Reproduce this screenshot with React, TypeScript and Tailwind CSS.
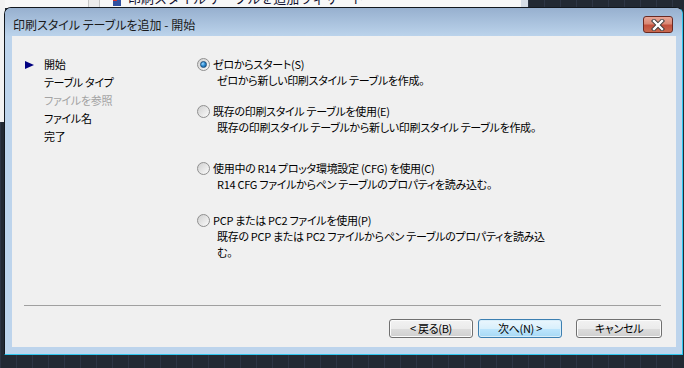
import React from "react";

function Radio({ checked }: { checked?: boolean }) {
  return (
    <span className="relative inline-flex h-[13px] w-[13px] shrink-0 items-center justify-center rounded-full border border-[#8f8f8f] bg-gradient-to-br from-[#d0d0d0] to-[#fbfbfb]">
      {checked && (
        <span className="h-[7px] w-[7px] rounded-full border border-[#1d4f7c] bg-[radial-gradient(circle_at_35%_35%,#9fd8ff_0%,#2f8fd6_45%,#0f4f8c_100%)]" />
      )}
    </span>
  );
}

function Option({
  label,
  desc,
  checked,
  className,
}: {
  label: string;
  desc: React.ReactNode;
  checked?: boolean;
  className?: string;
}) {
  return (
    <div className={className}>
      <div className="flex h-[16px] items-center leading-[16px]">
        <Radio checked={checked} />
        <span className="ml-[3px]">{label}</span>
      </div>
      <div className="pl-[20px] leading-[16px]">{desc}</div>
    </div>
  );
}

function Btn({ children, focus, w }: { children: React.ReactNode; focus?: boolean; w: string }) {
  return (
    <div
      className={
        "flex h-[19px] items-center justify-center rounded-[3px] border text-[11px] leading-none " +
        w +
        " " +
        (focus
          ? "border-[#3c7fb1] bg-[linear-gradient(#eaf6fd_0%,#d9f0fc_50%,#bee6fd_50%,#a7d9f5_100%)] shadow-[inset_0_0_0_1px_#d8eefa]"
          : "border-[#707070] bg-[linear-gradient(#f2f2f2_0%,#ebebeb_50%,#dddddd_50%,#cfcfcf_100%)] shadow-[inset_0_0_0_1px_#fcfcfc]")
      }
    >
      {children}
    </div>
  );
}

export default function App() {
  return (
    <div className="relative h-[368px] w-[684px] overflow-hidden bg-[#222933] font-['Noto_Sans_CJK_JP','Noto_Sans',sans-serif] text-[11px] tracking-[-0.3px] text-black [font-feature-settings:'palt']">
      {/* desktop grid */}
      <div className="absolute inset-0 bg-[repeating-linear-gradient(90deg,#2d3544_0px,#2d3544_1px,transparent_1px,transparent_16px)]" />

      {/* background window strip */}
      <div className="absolute left-0 top-0 h-[8px] w-[521px] bg-[#f7f7f7]">
        <div className="absolute left-[88px] top-0 h-[8px] w-[12px] border-x border-[#c6c6c6] bg-[#ececec]" />
        <div className="absolute left-[113px] top-[-2px] h-[8px] w-[8px] bg-[#3050a0]">
          <div className="h-[3px] w-[4px] bg-[#d03030]" />
        </div>
        <div className="absolute left-[128px] top-[-10px] whitespace-nowrap text-[13px] leading-[16px] tracking-normal text-[#101030] [font-feature-settings:normal]">
          印刷スタイル テーブルを追加ウィザード
        </div>
      </div>
      <div className="absolute left-[521px] top-0 h-[8px] w-[7px] bg-[#d6dde6]" />
      <div className="absolute left-0 top-0 h-[122px] w-[5px] bg-[#f2f2f2]" />

      {/* dialog */}
      <div className="absolute left-[4px] top-[7px] flex h-[348px] w-[679px] flex-col rounded-t-[7px] border border-[#12171d] border-b-[#2ec6ee] border-r-[#2ec6ee] bg-[#bdd4ec]">
        {/* title bar */}
        <div className="flex h-[28px] items-start justify-between rounded-t-[6px] bg-gradient-to-b from-[#97b0cf] to-[#bbd3eb] pl-[8px] pr-[9px]">
          <span className="mt-[9px] whitespace-nowrap text-[12px] leading-[16px] tracking-normal text-[#1a1a1a]">
            印刷スタイル テーブルを追加 - 開始
          </span>
          <div className="mt-[8px] flex h-[17px] w-[30px] items-center justify-center rounded-[3px] border border-[#6a2a22] bg-[linear-gradient(#e8a596_0%,#d98874_45%,#c2503c_55%,#c96a50_100%)]">
            <svg width="14" height="12" viewBox="0 0 14 12">
              <path d="M3 2 L11 10 M11 2 L3 10" stroke="#3a3a3a" strokeWidth="4.2" strokeLinecap="square" />
              <path d="M3 2 L11 10 M11 2 L3 10" stroke="#ffffff" strokeWidth="2.4" strokeLinecap="square" />
            </svg>
          </div>
        </div>

        {/* client area */}
        <div className="ml-[7px] mr-[6px] flex h-[311px] flex-col bg-[#f0f0f0]">
          <div className="flex h-[269px] pt-[19px]">
            {/* nav */}
            <div className="flex w-[185px] shrink-0">
              <div className="w-[32px] shrink-0 pl-[13px] pt-[6px]">
                <svg width="9" height="8" viewBox="0 0 9 8">
                  <path d="M0 0 L9 4 L0 8 Z" fill="#000080" />
                </svg>
              </div>
              <div className="flex flex-col leading-[18px]">
                <span>開始</span>
                <span>テーブル タイプ</span>
                <span className="text-[#a3a3a3]">ファイルを参照</span>
                <span>ファイル名</span>
                <span>完了</span>
              </div>
            </div>
            {/* options */}
            <div className="flex flex-col pt-[1px]">
              <Option checked label="ゼロからスタート(S)" desc="ゼロから新しい印刷スタイル テーブルを作成。" />
              <Option
                className="mt-[15px]"
                label="既存の印刷スタイル テーブルを使用(E)"
                desc="既存の印刷スタイル テーブルから新しい印刷スタイル テーブルを作成。"
              />
              <Option
                className="mt-[25px]"
                label="使用中の R14 プロッタ環境設定 (CFG) を使用(C)"
                desc="R14 CFG ファイルからペン テーブルのプロパティを読み込む。"
              />
              <Option
                className="mt-[20px]"
                label="PCP または PC2 ファイルを使用(P)"
                desc={
                  <>
                    既存の PCP または PC2 ファイルからペン テーブルのプロパティを読み込
                    <br />
                    む。
                  </>
                }
              />
            </div>
          </div>
          <div className="ml-[12px] mr-[15px] h-[1px] bg-[#a0a0a0]" />
          <div className="mt-[13px] flex justify-end pr-[14px]">
            <Btn w="w-[84px]">&lt; 戻る(B)</Btn>
            <div className="w-[5px]" />
            <Btn w="w-[84px]" focus>
              次へ(N) &gt;
            </Btn>
            <div className="w-[14px]" />
            <Btn w="w-[86px]">キャンセル</Btn>
          </div>
        </div>
      </div>
    </div>
  );
}
